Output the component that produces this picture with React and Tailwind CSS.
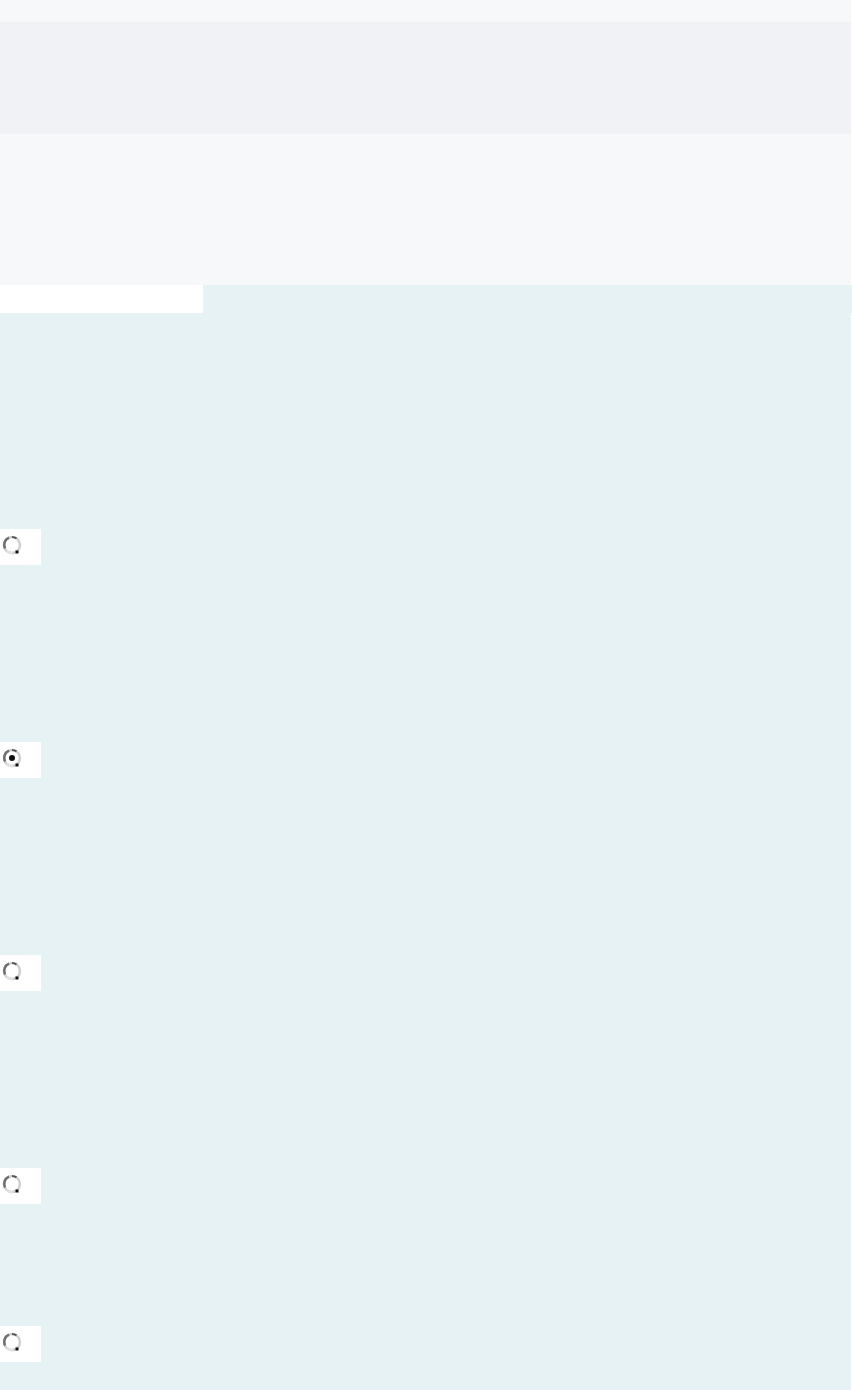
import React from 'react';

const options = [
  { id: 'opt-1', checked: false, space: 'h-[213px]' },
  { id: 'opt-2', checked: true, space: 'h-[213px]' },
  { id: 'opt-3', checked: false, space: 'h-[213px]' },
  { id: 'opt-4', checked: false, space: 'h-[158px]' },
  { id: 'opt-5', checked: false, space: 'h-[64px]' },
];

const RadioMark = ({ checked }) => (
  <svg width="22" height="22" viewBox="0 0 22 22" className="block">
    <circle cx="11" cy="11" r="8" fill="white" stroke="#cfcfcf" strokeWidth="2.5" />
    <path d="M4 14.5 A8 8 0 0 1 8 3.6" fill="none" stroke="#6e6e6e" strokeWidth="2.5" />
    <path d="M11 3 A8 8 0 0 1 15.5 4.4" fill="none" stroke="#555" strokeWidth="2" />
    <path d="M5.5 17 A8 8 0 0 0 12 19" fill="none" stroke="#e3e3e3" strokeWidth="2.5" />
    <rect x="14.5" y="16.5" width="3" height="3" fill="#111" />
    {checked && <circle cx="11" cy="11" r="3" fill="#111" />}
  </svg>
);

export default function App() {
  return (
    <div className="min-h-screen bg-white font-['Liberation_Sans',sans-serif]">
      {/* header bands */}
      <div className="w-[851px] h-[22px] bg-[#f7f8fa]" />
      <div className="w-[851px] h-[112px] bg-[#f1f2f6]" />
      <div className="w-[851px] h-[151px] bg-[#f7f8fa]" />

      {/* tab strip */}
      <div className="flex h-[28px]">
        <div className="w-[203px] bg-white" />
        <div className="flex-1 bg-[#e6f2f4]" />
      </div>

      {/* options panel */}
      <div className="w-[851px] bg-[#e6f2f4] pt-[216px] flex flex-col">
        {options.map((o) => (
          <div key={o.id} className={`${o.space} flex flex-col`}>
            <label className="w-[41px] h-[36px] bg-white flex items-start pt-[5px] pl-[1px] cursor-pointer">
              <input type="radio" name="choice" defaultChecked={o.checked} className="sr-only" />
              <RadioMark checked={o.checked} />
            </label>
          </div>
        ))}
      </div>
    </div>
  );
}
